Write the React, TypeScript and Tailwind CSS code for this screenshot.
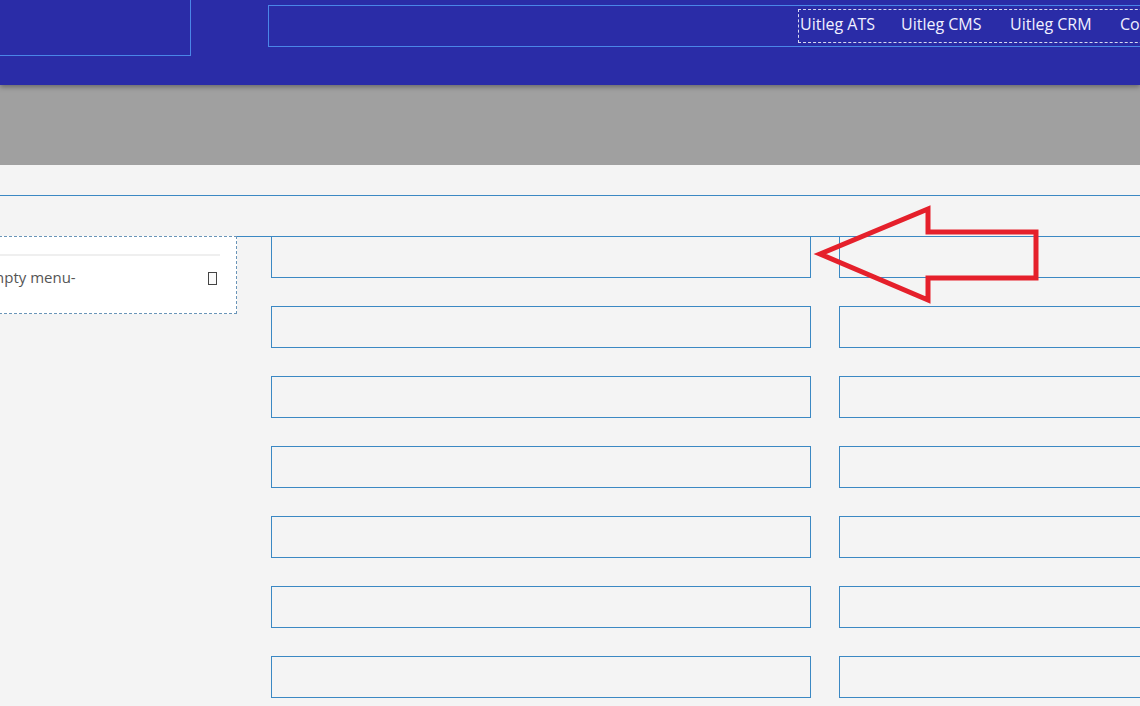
import React from "react";

const rows = [0, 1, 2, 3, 4, 5, 6];

export default function App() {
  return (
    <div
      className="relative w-[1140px] h-[706px] overflow-hidden bg-[#f4f4f4]"
      style={{ fontFamily: '"Open Sans", "Noto Sans", sans-serif' }}
    >
      {/* Header */}
      <header className="relative z-10 h-[85px] bg-[#2a2ca7] shadow-[0_2px_5px_rgba(0,0,0,0.35)] flex items-start">
        <div className="w-[191px] h-[56px] border-r border-b border-[#4a86e8] shrink-0" />
        <div className="ml-[77px] mt-[5px] h-[42px] flex-1 -mr-[20px] border-l border-t border-b border-[#4a86e8] flex items-start">
          <div className="ml-[529px] mt-[3px] h-[34px] flex-1 border border-dashed border-[#d8d8f0] flex items-center pb-[4px] text-[16px] text-[#f0f0ff] whitespace-nowrap">
            <span className="w-[102px] pl-[1px]">Uitleg ATS</span>
            <span className="w-[109px]">Uitleg CMS</span>
            <span className="w-[110px]">Uitleg CRM</span>
            <span>Contact</span>
          </div>
        </div>
      </header>

      {/* Gray band */}
      <div className="h-[80px] bg-[#a0a0a0]" />

      {/* Main */}
      <main className="bg-[#f4f4f4]">
        <div className="h-[30px]" />
        <div className="border-t border-[#3b88c3]" />
        <div className="h-[40px]" />
        <div className="flex items-start">
          <div className="-ml-[21px] w-[258px] h-[78px] shrink-0 bg-white border border-dashed border-[#6a95b8] pt-[17px] pr-[16px]">
            <div className="h-[2px] bg-[#efefef]" />
            <div className="flex items-center justify-between h-[40px] pl-[2px] pt-[3px]">
              <span className="text-[15px] text-[#555555]">Empty menu-</span>
              <span className="mr-[3px] mt-[1px] w-[9px] h-[13px] border-[1.5px] border-[#444] bg-[#fafafa]" />
            </div>
          </div>
          <div className="flex-1 border-t border-[#3b88c3] pl-[34px]">
            <div className="-mt-px grid grid-cols-[540px_340px] gap-x-[28px] gap-y-[28px]">
              {rows.map((r) => (
                <React.Fragment key={r}>
                  <div className="h-[42px] border border-[#3b88c3]" />
                  <div className="h-[42px] border border-[#3b88c3]" />
                </React.Fragment>
              ))}
            </div>
          </div>
        </div>
      </main>

      {/* Red arrow annotation */}
      <svg
        className="absolute left-0 top-0 pointer-events-none"
        width="1140"
        height="706"
        viewBox="0 0 1140 706"
      >
        <polygon
          points="820,254 928,209 928,232 1036,232 1036,278 928,278 928,300"
          fill="none"
          stroke="#e5202b"
          strokeWidth="5"
          strokeLinejoin="miter"
        />
      </svg>
    </div>
  );
}
